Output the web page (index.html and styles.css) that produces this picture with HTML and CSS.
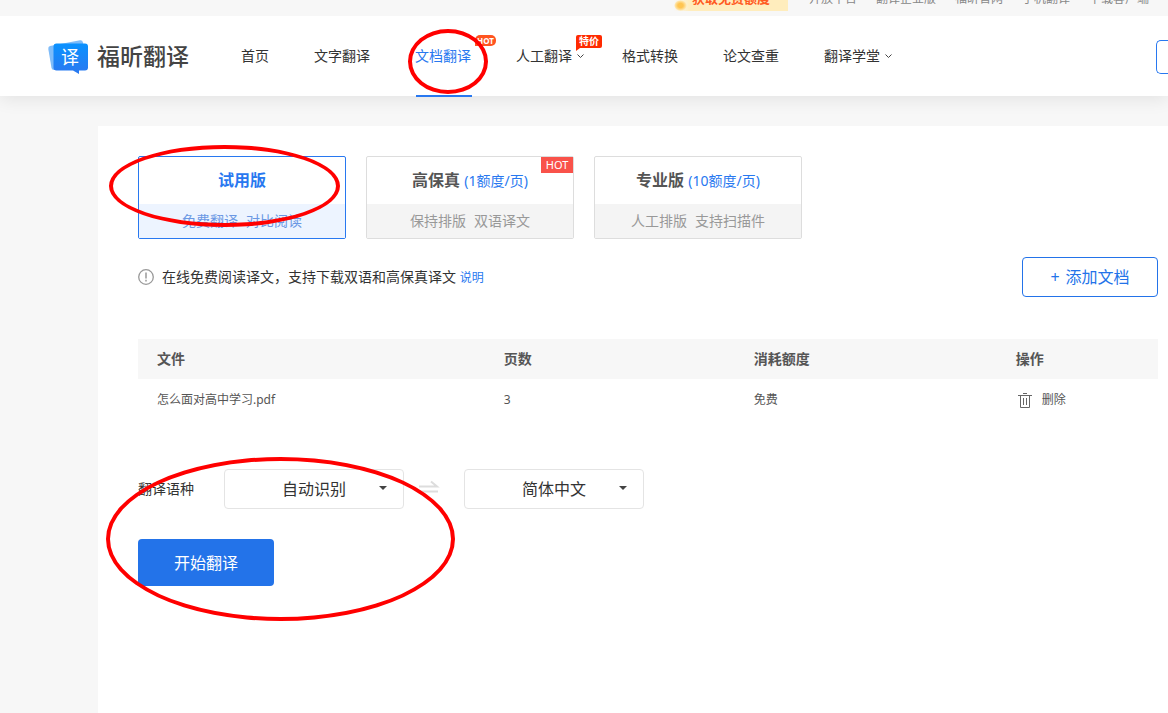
FILE: index.html
```html
<!DOCTYPE html>
<html lang="zh-CN">
<head>
<meta charset="utf-8">
<title>福昕翻译</title>
<link rel="stylesheet" href="styles.css">
</head>
<body>
<div class="topbar">
  <a class="promo" href="#"><span class="promo-coin"></span>获取免费额度</a>
  <a href="#">开放平台</a>
  <a href="#">翻译企业版</a>
  <a href="#">福昕官网</a>
  <a href="#">手机翻译</a>
  <a href="#">下载客户端</a>
</div>
<header class="header">
  <a class="logo" href="#">
    <span class="logo-mark">
      <svg width="40" height="34" viewBox="0 0 40 34" aria-hidden="true">
        <defs><linearGradient id="mark" x1="0" y1="0" x2="0" y2="1"><stop offset="0" stop-color="#0a92ff"/><stop offset="1" stop-color="#2b78f0"/></linearGradient></defs>
        <path d="M2 6 L32 0.3 Q34.500 0 35 2.500 L36 10 L8 30 H6 Q4 30 3.500 28 L0.300 9 Q0 6.500 2 6Z" fill="#7fbcf9"/>
        <path d="M8.500 3.500 H37 Q40 3.500 40 6.500 V27.500 Q40 30.500 37 30.500 H31 V34 L25 30.500 H8.500 Q5.500 30.500 5.500 27.500 V6.500 Q5.500 3.500 8.500 3.500Z" fill="url(#mark)"/>
      </svg>
      <span class="logo-char">译</span>
    </span>
    <span class="logo-name">福昕翻译</span>
  </a>
  <nav class="nav">
    <a class="nav-link" href="#">首页</a>
    <a class="nav-link" href="#">文字翻译</a>
    <a class="nav-link active" href="#">文档翻译<span class="badge badge-hot">HOT</span><span class="ring ring-nav"></span></a>
    <a class="nav-link has-menu" href="#">人工翻译<svg class="chevron" width="7" height="5" viewBox="0 0 7 5" aria-hidden="true"><path d="M0.500 0.500 L3.500 3.500 L6.500 0.500" fill="none" stroke="#444"/></svg><span class="badge badge-sale">特价</span></a>
    <a class="nav-link" href="#">格式转换</a>
    <a class="nav-link" href="#">论文查重</a>
    <a class="nav-link has-menu" href="#">翻译学堂<svg class="chevron" width="7" height="5" viewBox="0 0 7 5" aria-hidden="true"><path d="M0.500 0.500 L3.500 3.500 L6.500 0.500" fill="none" stroke="#444"/></svg></a>
  </nav>
  <button class="account" type="button" aria-label="账户"></button>
</header>
<main class="panel">
  <div class="plans">
    <button class="plan selected" type="button">
      <span class="plan-title">试用版</span>
      <span class="plan-note"><span>免费翻译</span><span>对比阅读</span></span>
      <span class="ring ring-plan"></span>
    </button>
    <button class="plan" type="button">
      <span class="plan-title">高保真 <span class="price">(1额度/页)</span></span>
      <span class="plan-note"><span>保持排版</span><span>双语译文</span></span>
      <span class="plan-hot">HOT</span>
    </button>
    <button class="plan" type="button">
      <span class="plan-title">专业版 <span class="price">(10额度/页)</span></span>
      <span class="plan-note"><span>人工排版</span><span>支持扫描件</span></span>
    </button>
  </div>
  <div class="info">
    <svg width="16" height="16" viewBox="0 0 16 16" aria-hidden="true"><circle cx="8" cy="8" r="7.300" fill="none" stroke="#999" stroke-width="1.300"/><path d="M8 3.500V9.500M8 10.800V12.400" stroke="#999" stroke-width="1.500"/></svg>
    <p class="info-text">在线免费阅读译文，支持下载双语和高保真译文 <a href="#">说明</a></p>
    <button class="add" type="button"><span>+</span>添加文档</button>
  </div>
  <table class="files">
    <colgroup><col class="c-file"><col class="c-pages"><col class="c-cost"><col></colgroup>
    <thead><tr><th>文件</th><th>页数</th><th>消耗额度</th><th>操作</th></tr></thead>
    <tbody><tr>
      <td>怎么面对高中学习.pdf</td><td>3</td><td>免费</td>
      <td><button class="delete" type="button"><svg width="14" height="15" viewBox="0 0 14 15" aria-hidden="true"><path d="M0 2.500H14M5 0.500H9M2.500 2.500V14.500H11.500V2.500M5.500 5V12M8.500 5V12" fill="none" stroke="#666"/></svg>删除</button></td>
    </tr></tbody>
  </table>
  <form class="translate">
    <div class="languages">
      <label for="from">翻译语种</label>
      <span class="select"><select id="from"><option>自动识别</option></select><svg class="caret" width="8" height="4" viewBox="0 0 8 4" aria-hidden="true"><path d="M0 0H8L4 4Z" fill="#444"/></svg></span>
      <svg class="swap" width="60" height="18" viewBox="0 0 60 18" aria-hidden="true"><path d="M15 6.500H33L27 1.500M34 11.500H16L22 16.500" fill="none" stroke="#ddd" stroke-width="2"/></svg>
      <span class="select"><select id="to" aria-label="目标语言"><option>简体中文</option></select><svg class="caret" width="8" height="4" viewBox="0 0 8 4" aria-hidden="true"><path d="M0 0H8L4 4Z" fill="#444"/></svg></span>
    </div>
    <button class="start" type="button">开始翻译</button>
    <span class="ring ring-form"></span>
  </form>
</main>
</body>
</html>
```
FILE: styles.css
```css
* { box-sizing: border-box; }
html { height: 100%; }
body {
  margin: 0;
  min-height: 100%;
  display: flex;
  flex-direction: column;
  background: #f7f7f7;
  color: #333;
  font: 14px/20px "Noto Sans", "Noto Sans CJK SC", sans-serif;
}
a { color: inherit; text-decoration: none; }
button, select { font: inherit; color: inherit; margin: 0; padding: 0; cursor: pointer; }

.topbar {
  position: relative;
  z-index: 1;
  height: 16px;
  overflow: hidden;
  display: flex;
  justify-content: flex-end;
  align-items: flex-end;
  gap: 19px;
  padding: 0 19px 7px 0;
  background: #f7f7f7;
  font-size: 12px;
  color: #888;
}
.promo {
  display: flex;
  align-items: center;
  gap: 5px;
  height: 24px;
  margin-bottom: -2px;
  padding: 0 18px 2px 0;
  margin-right: 2px;
  background: linear-gradient(90deg, #f7f7f7, #ffedbd 16px);
  color: #ff5a1f;
  font-size: 13px;
  font-weight: 700;
}
.promo-coin {
  width: 13px;
  height: 11px;
  margin-top: 14px;
  border-radius: 50%;
  background: radial-gradient(closest-side, #ffc552 40%, #ffe2a0 80%, transparent);
}

.header {
  position: relative;
  display: flex;
  align-items: center;
  height: 80px;
  padding-left: 48px;
  background: #fff;
  box-shadow: 0 4px 16px rgba(0, 0, 0, 0.08);
}
.logo { display: flex; align-items: center; gap: 9px; }
.logo-mark { position: relative; height: 34px; width: 40px; margin-top: 2px; }
.logo-char {
  position: absolute;
  left: 13px;
  top: 7px;
  font-size: 18px;
  color: #fff;
}
.logo-name { font-size: 23px; line-height: 32px; font-weight: 500; color: #444; }
.nav { display: flex; gap: 45px; margin-left: 52px; height: 100%; }
.nav-link { position: relative; display: flex; align-items: center; white-space: nowrap; }
.has-menu { gap: 5px; margin-right: -7px; }
.active { color: #2878f0; }
.active::after {
  content: "";
  position: absolute;
  left: 1px;
  right: -1px;
  bottom: -1px;
  height: 2px;
  background: #2878f0;
}
.badge { position: absolute; color: #fff; font-weight: 700; text-align: center; }
.badge::after {
  content: "";
  position: absolute;
  left: 0;
  top: 100%;
  border-top: 3px solid #ff2a00;
  border-right: 4px solid transparent;
}
.badge-hot {
  left: 60px;
  top: 19px;
  width: 21px;
  border-radius: 5px 5px 5px 0;
  background: #ff5420;
  font-size: 8px;
  line-height: 11px;
}
.badge-hot::after { display: none; }
.badge-sale {
  left: 60px;
  top: 19px;
  width: 26px;
  border-radius: 2px 2px 2px 0;
  background: #ff2a00;
  font-size: 10px;
  line-height: 13px;
}
.account {
  flex: none;
  width: 12px;
  height: 34px;
  margin: 2px 0 0 auto;
  border: 1px solid #2878f0;
  border-right: 0;
  border-radius: 5px 0 0 5px;
  background: #fff;
}

.ring {
  position: absolute;
  z-index: 2;
  border: 4px solid #f00;
  border-radius: 50%;
  pointer-events: none;
}
.ring-nav { left: -7px; top: 13px; width: 80px; height: 65px; }
.ring-plan { left: -30px; top: -12px; width: 231px; height: 82px; }
.ring-form { left: -32px; top: -12px; width: 349px; height: 164px; }

.panel { flex: 1; margin: 30px 0 0 98px; padding: 30px 10px 30px 40px; background: #fff; }
.plans { display: flex; gap: 20px; }
.plan {
  position: relative;
  width: 208px;
  border: 1px solid #ddd;
  border-radius: 2px;
  background: #fff;
}
.plan-title { display: block; line-height: 47px; font-size: 16px; font-weight: 700; color: #555; }
.price { font-size: 14px; font-weight: 400; color: #2878f0; }
.plan-note {
  display: flex;
  justify-content: center;
  gap: 8px;
  line-height: 34px;
  background: #f4f4f4;
  color: #999;
}
.selected { border-color: #2878f0; }
.selected .plan-title { color: #2878f0; }
.selected .plan-note { background: #edf4ff; color: #6b98e4; }
.plan-hot {
  position: absolute;
  right: 0;
  top: 0;
  width: 32px;
  background: #f9524a;
  color: #fff;
  font-size: 11px;
  line-height: 16px;
}

.info { display: flex; align-items: center; gap: 8px; margin-top: 18px; }
.info-text { margin: 0; }
.info-text a { font-size: 12px; color: #2878f0; }
.add {
  display: flex;
  justify-content: center;
  align-items: center;
  gap: 6px;
  width: 136px;
  height: 40px;
  margin-left: auto;
  border: 1px solid #2373e9;
  border-radius: 4px;
  background: #fff;
  color: #2373e9;
  font-size: 16px;
}

.files { width: 100%; margin-top: 42px; border-collapse: collapse; table-layout: fixed; color: #555; }
.c-file { width: 34%; }
.c-pages { width: 24.5%; }
.c-cost { width: 25.7%; }
.files th, .files td { height: 40px; padding: 0 0 0 19px; text-align: left; }
.files th { background: #f7f7f7; }
.files td { padding-top: 2px; font-size: 12px; }
.delete { display: flex; align-items: center; gap: 10px; margin-left: 2px; border: 0; background: none; }

.translate { position: relative; margin-top: 50px; }
.languages { display: flex; align-items: center; }
.languages label { margin-right: 30px; }
.select { position: relative; width: 180px; height: 40px; }
.select select {
  width: 100%;
  height: 100%;
  border: 1px solid #e4e4e4;
  border-radius: 4px;
  background: #fff;
  font-size: 16px;
  text-align: center;
  text-align-last: center;
  appearance: none;
}
.caret { position: absolute; right: 17px; top: 17px; pointer-events: none; }
.start {
  width: 136px;
  height: 47px;
  margin-top: 30px;
  border: 0;
  border-radius: 4px;
  background: #2373e9;
  color: #fff;
  font-size: 16px;
}
```
